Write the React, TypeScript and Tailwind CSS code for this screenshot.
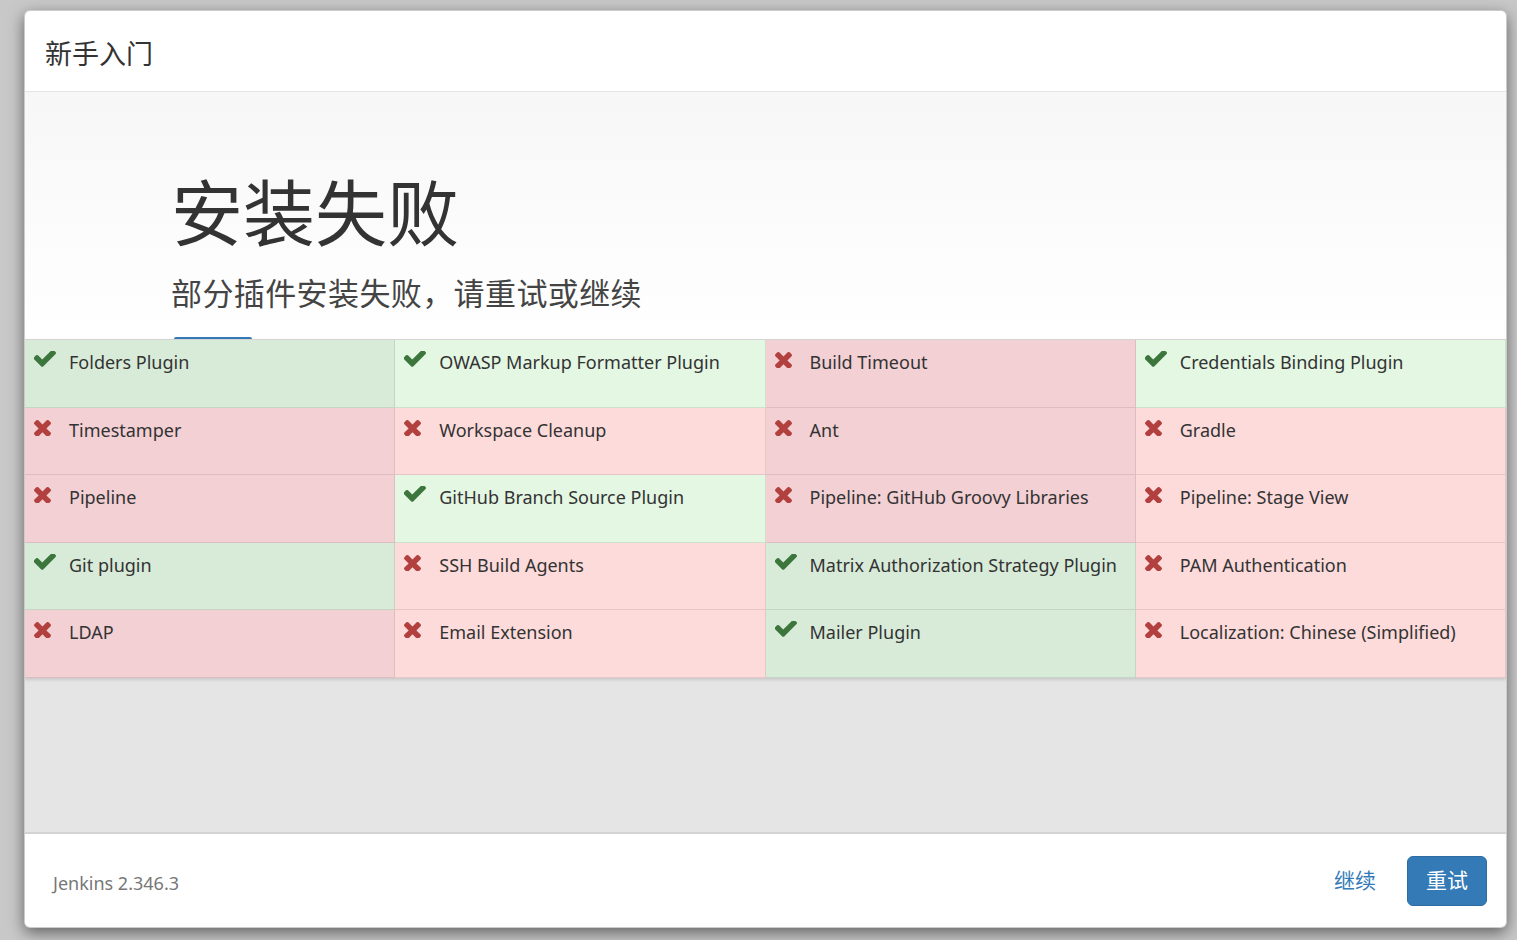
const plugins: { name: string; ok: boolean }[] = [
  { name: "Folders Plugin", ok: true },
  { name: "OWASP Markup Formatter Plugin", ok: true },
  { name: "Build Timeout", ok: false },
  { name: "Credentials Binding Plugin", ok: true },
  { name: "Timestamper", ok: false },
  { name: "Workspace Cleanup", ok: false },
  { name: "Ant", ok: false },
  { name: "Gradle", ok: false },
  { name: "Pipeline", ok: false },
  { name: "GitHub Branch Source Plugin", ok: true },
  { name: "Pipeline: GitHub Groovy Libraries", ok: false },
  { name: "Pipeline: Stage View", ok: false },
  { name: "Git plugin", ok: true },
  { name: "SSH Build Agents", ok: false },
  { name: "Matrix Authorization Strategy Plugin", ok: true },
  { name: "PAM Authentication", ok: false },
  { name: "LDAP", ok: false },
  { name: "Email Extension", ok: false },
  { name: "Mailer Plugin", ok: true },
  { name: "Localization: Chinese (Simplified)", ok: false },
];

function CheckIcon() {
  return (
    <svg viewBox="143 430 1528 1096" className="w-[22px] h-[16px] mt-[11px]" fill="#3c763d">
      <path d="M1671 566q0 40-28 68l-724 724-136 136q-28 28-68 28t-68-28l-136-136-362-362q-28-28-28-68t28-68l136-136q28-28 68-28t68 28l294 295 656-657q28-28 68-28t68 28l136 136q28 28 28 68z" />
    </svg>
  );
}

function CrossIcon() {
  return (
    <svg viewBox="302 302 1188 1188" className="w-[17px] h-[17px] mt-[11px]" fill="#b2403e">
      <path d="M1490 1322q0 40-28 68l-136 136q-28 28-68 28t-68-28l-294-294-294 294q-28 28-68 28t-68-28l-136-136q-28-28-28-68t28-68l294-294-294-294q-28-28-28-68t28-68l136-136q28-28 68-28t68 28l294 294 294-294q28-28 68-28t68 28l136 136q28 28 28 68t-28 68l-294 294 294 294q28 28 28 68z" />
    </svg>
  );
}

export default function App() {
  const font = { fontFamily: '"Noto Sans", "Noto Sans CJK SC", sans-serif' };
  return (
    <div className="w-[1517px] h-[940px] bg-[#c8c8c8] pt-[10px] pl-[24px] overflow-hidden" style={font}>
      <div className="w-[1483px] h-[918px] bg-white rounded-[6px] border border-black/20 shadow-[0_5px_15px_rgba(0,0,0,0.5)] flex flex-col overflow-hidden">
        {/* Header */}
        <div className="h-[81px] shrink-0 border-b border-[#e5e5e5] flex items-center pl-[20px] pt-[4px]">
          <h4 className="text-[27px] text-[#333] leading-none">新手入门</h4>
        </div>

        {/* Body */}
        <div className="flex-1 flex flex-col bg-[#e5e5e5]">
          <div className="h-[247px] shrink-0 bg-gradient-to-b from-[#f7f7f7] to-white pl-[146px] pt-[84px] flex flex-col">
            <h1 className="text-[72px] leading-none text-[#333]">安装失败</h1>
            <p className="text-[31px] leading-none text-[#444] mt-[30px] tracking-[0.4px]">部分插件安装失败，请重试或继续</p>
            <div className="mt-auto w-[78px] h-[2px] bg-[#337ab7] rounded-t-[3px] ml-[3px]" />
          </div>

          <div className="grid grid-cols-4 border-t border-[#d4d4d4] shadow-[0_2px_3px_rgba(0,0,0,0.12)]">
            {plugins.map((p, i) => {
              const odd = i % 2 === 0;
              const bg = p.ok
                ? odd
                  ? "bg-[#d8ebd8]"
                  : "bg-[#e3f7e3]"
                : odd
                ? "bg-[#f2d0d3]"
                : "bg-[#fddbdb]";
              return (
                <div
                  key={p.name}
                  className={`${bg} h-[67.6px] border-r border-b border-black/[0.09] flex items-start pl-[9px]`}
                >
                  <div className="w-[22px] flex justify-start">{p.ok ? <CheckIcon /> : <CrossIcon />}</div>
                  <span className="ml-[13px] mt-[9px] text-[18px] leading-[26px] text-[#333] whitespace-nowrap">{p.name}</span>
                </div>
              );
            })}
          </div>
          <div className="flex-1" />
        </div>

        {/* Footer */}
        <div className="h-[95px] shrink-0 border-t-2 border-[#d3d3d3] flex items-center pl-[28px] pr-[19px]">
          <span className="text-[18px] text-[#777] mt-[6px]">Jenkins 2.346.3</span>
          <div className="ml-auto flex items-center gap-[31px]">
            <a className="text-[21px] text-[#337ab7]">继续</a>
            <button className="w-[80px] h-[50px] rounded-[6px] bg-[#337ab7] border border-[#2e6da4] text-white text-[21px]">
              重试
            </button>
          </div>
        </div>
      </div>
    </div>
  );
}
